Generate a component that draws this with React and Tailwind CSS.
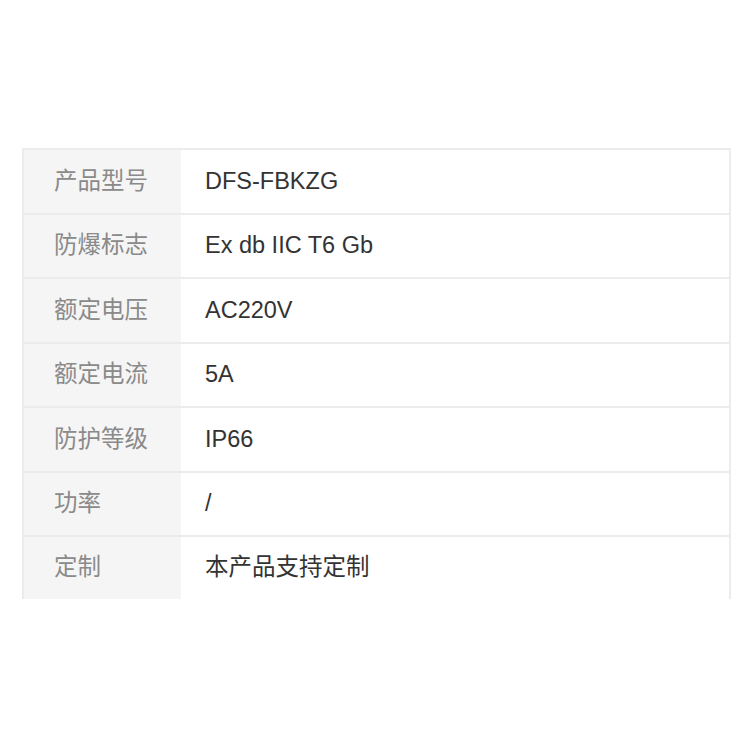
import React from "react";

const rows = [
  ["产品型号", "DFS-FBKZG"],
  ["防爆标志", "Ex db IIC T6 Gb"],
  ["额定电压", "AC220V"],
  ["额定电流", "5A"],
  ["防护等级", "IP66"],
  ["功率", "/"],
  ["定制", "本产品支持定制"],
];

const App = () => {
  return (
    <div
      className="w-[750px] h-[750px] bg-white pt-[148px] pl-[22px]"
      style={{ fontFamily: '"Liberation Sans", "Noto Sans CJK SC", sans-serif' }}
    >
      <div className="w-[709px] border-t-2 border-x-2 border-[#ececec]">
        {rows.map(([label, value], i) => (
          <div
            key={label}
            className={
              i < rows.length - 1
                ? "flex h-[64.5px] border-b-2 border-[#ececec]"
                : "flex h-[62px]"
            }
          >
            <div className="w-[157px] shrink-0 bg-[#f5f5f5] flex items-center pl-[30px] text-[23.5px] text-[#8a8a8a]">
              {label}
            </div>
            <div className="flex-1 flex items-center pl-[24px] text-[23.5px] text-[#333]">
              {value}
            </div>
          </div>
        ))}
      </div>
    </div>
  );
};

export default App;
